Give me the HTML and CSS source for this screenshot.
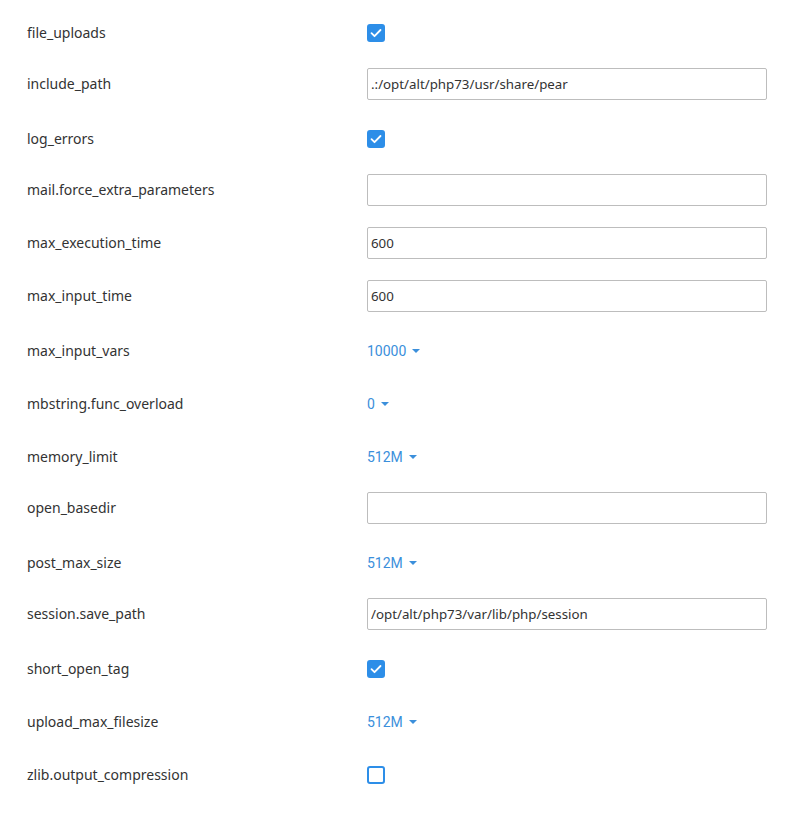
FILE: index.html
```html
<!DOCTYPE html>
<html>
<head>
<meta charset="utf-8">
<link rel="stylesheet" href="styles.css">
</head>
<body>
<div class="settings">
  <div class="row"><div class="label">file_uploads</div><div class="control"><span class="cb checked"><svg viewBox="0 0 18 18" width="18" height="18"><path d="M4.5 9.2l3 3 6-6.2" fill="none" stroke="#fff" stroke-width="1.8" stroke-linecap="round" stroke-linejoin="round"/></svg></span></div></div>
  <div class="row row-input"><div class="label">include_path</div><div class="control"><input class="text" type="text" value=".:/opt/alt/php73/usr/share/pear"></div></div>
  <div class="row"><div class="label">log_errors</div><div class="control"><span class="cb checked"><svg viewBox="0 0 18 18" width="18" height="18"><path d="M4.5 9.2l3 3 6-6.2" fill="none" stroke="#fff" stroke-width="1.8" stroke-linecap="round" stroke-linejoin="round"/></svg></span></div></div>
  <div class="row row-input"><div class="label">mail.force_extra_parameters</div><div class="control"><input class="text" type="text" value=""></div></div>
  <div class="row row-input"><div class="label">max_execution_time</div><div class="control"><input class="text" type="text" value="600"></div></div>
  <div class="row row-input"><div class="label">max_input_time</div><div class="control"><input class="text" type="text" value="600"></div></div>
  <div class="row"><div class="label">max_input_vars</div><div class="control"><span class="dd">10000<span class="caret"></span></span></div></div>
  <div class="row"><div class="label">mbstring.func_overload</div><div class="control"><span class="dd">0<span class="caret"></span></span></div></div>
  <div class="row"><div class="label">memory_limit</div><div class="control"><span class="dd">512M<span class="caret"></span></span></div></div>
  <div class="row row-input"><div class="label">open_basedir</div><div class="control"><input class="text" type="text" value=""></div></div>
  <div class="row"><div class="label">post_max_size</div><div class="control"><span class="dd">512M<span class="caret"></span></span></div></div>
  <div class="row row-input"><div class="label">session.save_path</div><div class="control"><input class="text" type="text" value="/opt/alt/php73/var/lib/php/session"></div></div>
  <div class="row"><div class="label">short_open_tag</div><div class="control"><span class="cb checked"><svg viewBox="0 0 18 18" width="18" height="18"><path d="M4.5 9.2l3 3 6-6.2" fill="none" stroke="#fff" stroke-width="1.8" stroke-linecap="round" stroke-linejoin="round"/></svg></span></div></div>
  <div class="row"><div class="label">upload_max_filesize</div><div class="control"><span class="dd">512M<span class="caret"></span></span></div></div>
  <div class="row"><div class="label">zlib.output_compression</div><div class="control"><span class="cb"></span></div></div>
</div>
</body>
</html>
```
FILE: styles.css
```css
html, body {
  margin: 0;
  padding: 0;
  background: #fff;
}
.settings {
  padding: 6px 40px 0 27px;
  font-family: "Noto Sans", "Open Sans", sans-serif;
  font-size: 14px;
  color: #333;
}
.row {
  box-sizing: border-box;
  display: flex;
  align-items: center;
  height: 53px;
}
.row-input {
  padding-bottom: 4px;
}
.label {
  width: 340px;
  flex: none;
}
.control {
  flex: 1;
  display: flex;
  align-items: center;
}
.cb {
  box-sizing: border-box;
  width: 18px;
  height: 18px;
  border-radius: 3px;
  border: 2px solid #2d8ee8;
  background: #fff;
  display: inline-block;
  position: relative;
}
.cb.checked {
  background: #2d8ee8;
}
.cb svg {
  position: absolute;
  left: -2px;
  top: -2px;
}
.text {
  box-sizing: border-box;
  width: 400px;
  height: 32px;
  border: 1px solid #bdbdbd;
  border-radius: 2px;
  padding: 0 3px;
  font-family: "Noto Sans", "Open Sans", sans-serif;
  font-size: 13.3px;
  color: #333;
  margin: 0;
  outline: none;
}
.dd {
  font-family: Roboto, sans-serif;
  font-size: 14px;
  color: #3b8fdb;
  display: inline-flex;
  align-items: center;
}
.caret {
  display: inline-block;
  width: 0;
  height: 0;
  margin-left: 6px;
  border-left: 4px solid transparent;
  border-right: 4px solid transparent;
  border-top: 4px solid #3b8fdb;
}
```
